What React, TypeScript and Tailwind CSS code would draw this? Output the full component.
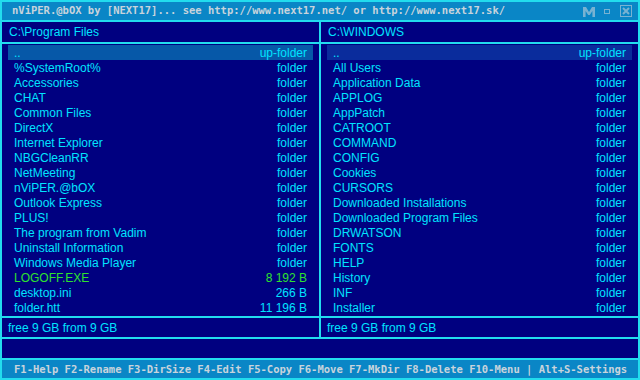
import React from "react";

type Row = { name: string; info: string; green?: boolean };

const left: Row[] = [
  { name: "..", info: "up-folder" },
  { name: "%SystemRoot%", info: "folder" },
  { name: "Accessories", info: "folder" },
  { name: "CHAT", info: "folder" },
  { name: "Common Files", info: "folder" },
  { name: "DirectX", info: "folder" },
  { name: "Internet Explorer", info: "folder" },
  { name: "NBGCleanRR", info: "folder" },
  { name: "NetMeeting", info: "folder" },
  { name: "nViPER.@bOX", info: "folder" },
  { name: "Outlook Express", info: "folder" },
  { name: "PLUS!", info: "folder" },
  { name: "The program from Vadim", info: "folder" },
  { name: "Uninstall Information", info: "folder" },
  { name: "Windows Media Player", info: "folder" },
  { name: "LOGOFF.EXE", info: "8 192 B", green: true },
  { name: "desktop.ini", info: "266 B" },
  { name: "folder.htt", info: "11 196 B" },
];

const right: Row[] = [
  { name: "..", info: "up-folder" },
  { name: "All Users", info: "folder" },
  { name: "Application Data", info: "folder" },
  { name: "APPLOG", info: "folder" },
  { name: "AppPatch", info: "folder" },
  { name: "CATROOT", info: "folder" },
  { name: "COMMAND", info: "folder" },
  { name: "CONFIG", info: "folder" },
  { name: "Cookies", info: "folder" },
  { name: "CURSORS", info: "folder" },
  { name: "Downloaded Installations", info: "folder" },
  { name: "Downloaded Program Files", info: "folder" },
  { name: "DRWATSON", info: "folder" },
  { name: "FONTS", info: "folder" },
  { name: "HELP", info: "folder" },
  { name: "History", info: "folder" },
  { name: "INF", info: "folder" },
  { name: "Installer", info: "folder" },
];

function Panel({ path, rows, active }: { path: string; rows: Row[]; active: boolean }) {
  return (
    <div className="flex flex-1 flex-col gap-[2px]">
      <div className="h-[20px] bg-[#000080] pl-[7px] pt-[1px] leading-[19px]">{path}</div>
      <div className="h-[272px] overflow-hidden bg-[#000080] px-[6px] pt-[1px]">
        {rows.map((r, i) => (
          <div
            key={i}
            className={
              "flex h-[15px] justify-between px-[6px] pt-[1px] leading-[14px] " +
              (i === 0 ? (active ? "bg-[#0658a8] " : "bg-[#0a2c9c] ") : "") +
              (r.green ? "text-[#2ee22e]" : "")
            }
          >
            <span className="whitespace-pre">{r.name}</span>
            <span className="whitespace-pre">{r.info}</span>
          </div>
        ))}
      </div>
      <div className="h-[19px] bg-[#000080] pl-[6px] pt-[1px] leading-[18px]">free 9 GB from 9 GB</div>
    </div>
  );
}

export default function App() {
  return (
    <div
      className="flex h-[380px] w-[640px] flex-col gap-[2px] bg-[#22dcee] p-[2px] text-[12px] text-[#00e4ff]"
      style={{ fontFamily: '"Liberation Sans", Arial, sans-serif' }}
    >
      <div
        className="flex h-[18px] items-center justify-between bg-[#0a86c6] pl-[10px] pr-[4px] text-[10.5px] font-bold text-[#c8d4dc]"
        style={{ fontFamily: '"DejaVu Sans Mono", monospace' }}
      >
        <span className="whitespace-pre">
          nViPER.@bOX by [NEXT17]... see http://www.next17.net/ or http://www.next17.sk/
        </span>
        <div className="flex items-center">
          <svg width="12" height="10" viewBox="0 0 12 10" className="mr-[9px] mt-[2px]">
            <path d="M0 10V0h3l3 5 3-5h3v10H9.4V4L6.8 8H5.2L2.6 4v6z" fill="#78b2d2" />
          </svg>
          <svg width="6" height="5" viewBox="0 0 6 5" className="mr-[10px] mt-[1px]">
            <rect x="0.5" y="0.5" width="5" height="4" fill="none" stroke="#78b2d2" strokeWidth="1" />
          </svg>
          <svg width="12" height="12" viewBox="0 0 12 12" className="mr-[2px]">
            <rect x="0.5" y="0.5" width="11" height="11" fill="none" stroke="#78b2d2" strokeWidth="1" />
            <path d="M3 3l6 6M9 3l-6 6" stroke="#78b2d2" strokeWidth="2" />
          </svg>
        </div>
      </div>
      <div className="flex gap-[2px]">
        <Panel path="C:\Program Files" rows={left} active={true} />
        <Panel path="C:\WINDOWS" rows={right} active={false} />
      </div>
      <div className="h-[19px] bg-[#000080]" />
      <div
        className="h-[18px] bg-[#0a86c6] pl-[12px] text-[10.5px] font-bold leading-[18px] text-[#c8d4dc]"
        style={{ fontFamily: '"DejaVu Sans Mono", monospace' }}
      >
        <span className="whitespace-pre">
          F1-Help F2-Rename F3-DirSize F4-Edit F5-Copy F6-Move F7-MkDir F8-Delete F10-Menu | Alt+S-Settings
        </span>
      </div>
    </div>
  );
}
